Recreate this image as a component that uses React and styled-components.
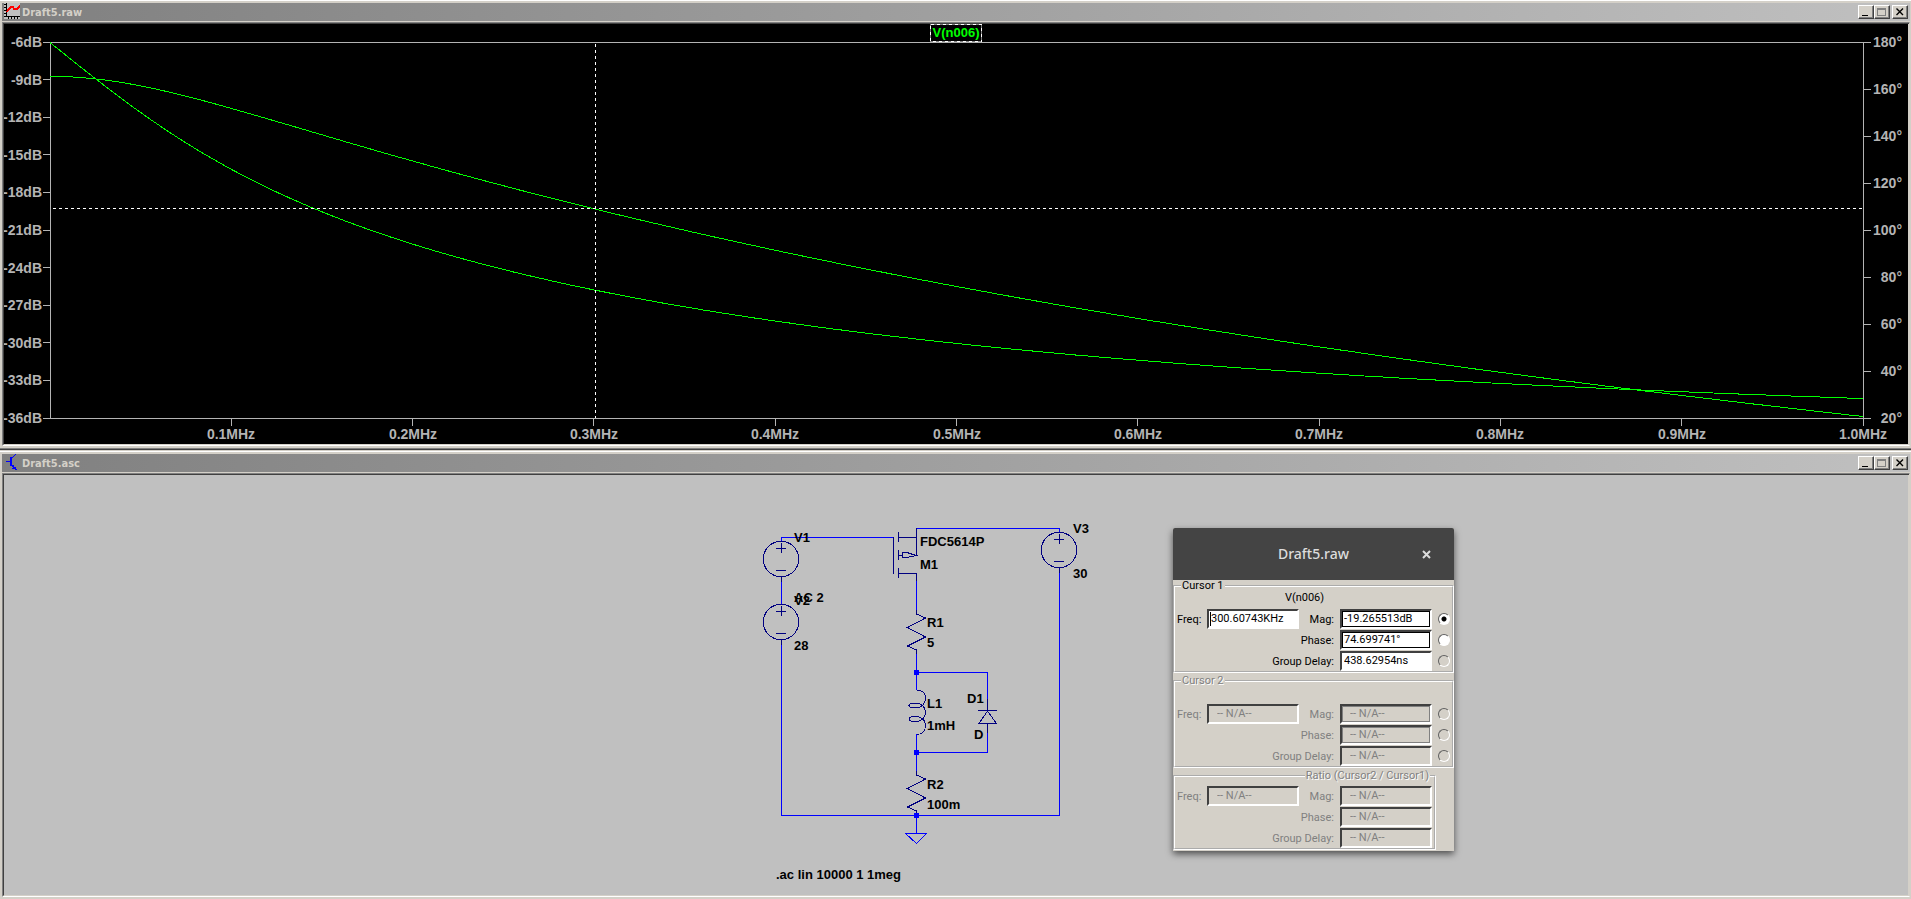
import React, { Fragment } from 'react'
import styled, { createGlobalStyle } from 'styled-components'

const PLOT = { left: 50, right: 1863, top: 42, bottom: 418 }
const POLES = [0.12, 0.397] // MHz
const DC_GAIN = -8.7

const xOf = (mhz) => PLOT.left + mhz * (PLOT.right - PLOT.left)
const yOfDb = (db) =>
  PLOT.top + ((-6 - db) / 30) * (PLOT.bottom - PLOT.top)
const yOfDeg = (deg) =>
  PLOT.top + ((180 - deg) / 160) * (PLOT.bottom - PLOT.top)

const magnitude = (f) =>
  POLES.reduce((sum, p) => sum - 10 * Math.log10(1 + (f / p) ** 2), DC_GAIN)
const phase = (f) =>
  POLES.reduce((sum, p) => sum - (Math.atan(f / p) * 180) / Math.PI, 180)

const trace = (fn, toY) =>
  Array.from({ length: 401 }, (_, i) => {
    const f = i / 400
    return `${xOf(f).toFixed(1)},${(toY(fn(f)) + 0.5).toFixed(1)}`
  }).join(' ')

const dbTicks = Array.from({ length: 11 }, (_, i) => -6 - i * 3)
const degTicks = Array.from({ length: 9 }, (_, i) => 180 - i * 20)
const freqTicks = Array.from({ length: 10 }, (_, i) => (i + 1) / 10)

const WaveIcon = () => (
  <TitleIcon viewBox="0 0 16 16" shapeRendering="crispEdges" aria-hidden="true">
    <rect width="16" height="16" fill="#c0c0c0" />
    <path
      d="M2.5 0V14M0 1.5H2M0 4.5H2M0 7.5H2M0 10.5H2M0 13.5H16M4.5 14V16M7.5 14V16M10.5 14V16M13.5 14V16"
      stroke="#000"
      fill="none"
    />
    <path
      d="M3 9L4 7L6 5L7 4H9L10 6H13L14 5L16 3"
      stroke="#f00"
      strokeWidth="1.5"
      fill="none"
    />
  </TitleIcon>
)

const SchematicIcon = () => (
  <TitleIcon viewBox="0 0 16 16" shapeRendering="crispEdges" aria-hidden="true">
    <path d="M2 7.5H6M11.5 0.5L7 5M7 10L12 15" stroke="#00f" fill="none" />
    <path d="M6 3H8V12H6ZM8 11H10V13H12V15H13V16H11V15H8V14H9V13H8Z" fill="#00f" />
  </TitleIcon>
)

const TitleBar = ({ icon, title }) => (
  <Bar>
    {icon}
    <BarTitle>{title}</BarTitle>
    <BarButton aria-label="Minimize">
      <svg width="14" height="12" shapeRendering="crispEdges">
        <rect x="3" y="9" width="6" height="1" fill="#000" />
      </svg>
    </BarButton>
    <BarButton aria-label="Maximize">
      <svg width="14" height="12" shapeRendering="crispEdges">
        <path d="M2.5 2.5H10.5V9.5H2.5Z" stroke="#808080" fill="none" />
        <rect x="2" y="2" width="9" height="2" fill="#808080" />
      </svg>
    </BarButton>
    <BarButton aria-label="Close" $spaced>
      <svg width="14" height="12">
        <path d="M3.5 2.5L10 9M10 2.5L3.5 9" stroke="#000" strokeWidth="1.4" fill="none" />
      </svg>
    </BarButton>
  </Bar>
)

const Plot = () => (
  <Drawing viewBox="4 24 1904 420" shapeRendering="crispEdges">
    <g stroke="#b4b4b4" fill="none">
      <path d="M43 42.5H1871M50.5 42V419M43 418.5H1871M1863.5 42V426" />
      {dbTicks.map((db) => (
        <path key={db} d={`M43 ${Math.floor(yOfDb(db)) + 0.5}H50`} />
      ))}
      {degTicks.map((deg) => (
        <path key={deg} d={`M1863 ${Math.floor(yOfDeg(deg)) + 0.5}H1871`} />
      ))}
      {freqTicks.map((f) => (
        <path key={f} d={`M${Math.floor(xOf(f)) + 0.5} 418V426`} />
      ))}
    </g>
    {dbTicks.map((db) => (
      <AxisText key={db} x="42" y={Math.round(yOfDb(db)) + 5} textAnchor="end">
        {db}dB
      </AxisText>
    ))}
    {degTicks.map((deg) => (
      <AxisText key={deg} x="1902" y={Math.round(yOfDeg(deg)) + 5} textAnchor="end">
        {deg}°
      </AxisText>
    ))}
    {freqTicks.map((f) => (
      <AxisText key={f} x={Math.round(xOf(f))} y="439" textAnchor="middle">
        {f.toFixed(1)}MHz
      </AxisText>
    ))}
    <g stroke="#0f0" fill="none">
      <polyline points={trace(magnitude, yOfDb)} />
      <polyline points={trace(phase, yOfDeg)} />
    </g>
    <path
      d="M595.5 44V418M53 208.5H1863"
      stroke="#fff"
      strokeDasharray="3 3"
      fill="none"
    />
    <rect x="930.5" y="24.5" width="51" height="17" stroke="#808080" fill="none" />
    <rect
      x="930.5"
      y="24.5"
      width="51"
      height="17"
      stroke="#fff"
      strokeDasharray="3 3"
      fill="none"
    />
    <TraceName x="956" y="37" textAnchor="middle">
      V(n006)
    </TraceName>
  </Drawing>
)

const VoltageSource = ({ x, y }) => (
  <g>
    <circle cx={x} cy={y} r="17.7" />
    <path
      d={`M${x - 5} ${y - 10.5}H${x + 5}M${x + 0.5} ${y - 16}V${y - 6}M${x - 5} ${y + 11.5}H${x + 5}M${x + 0.5} ${y + 18}V${y + 23}`}
    />
  </g>
)

const Resistor = ({ x, y }) => (
  <path d={`M${x} ${y}v4l9 4l-18 9.5l18 9.5l-18 9l9 4v4`} />
)

const labels = [
  ['V1', 794, 542],
  ['V2', 794, 605],
  ['AC 2', 794, 602],
  ['28', 794, 650],
  ['FDC5614P', 920, 546],
  ['M1', 920, 569],
  ['V3', 1073, 533],
  ['30', 1073, 578],
  ['R1', 927, 627],
  ['5', 927, 647],
  ['L1', 927, 708],
  ['1mH', 927, 730],
  ['D1', 967, 703],
  ['D', 974, 739],
  ['R2', 927, 789],
  ['100m', 927, 809],
  ['.ac lin 10000 1 1meg', 776, 879],
]

const Schematic = () => (
  <Drawing viewBox="4 475 1904 420" shapeRendering="crispEdges">
    <g stroke="#0000ff" fill="none">
      <path d="M781.5 541V537.5H893.5" />
      <path d="M916.5 555V528.5H1059.5V532" />
      <path d="M781.5 577V605M781.5 640V815.5H1059.5V568" />
      <path d="M916.5 573V610M916.5 653V690M916.5 734V771M916.5 815V833" />
      <path d="M916.5 672.5H987.5V699M987.5 733V752.5H916.5" />
      <path d="M905.5 833.5H926.5L916.5 843.5Z" />
    </g>
    <g stroke="#000080" fill="none">
      <VoltageSource x={781} y={559} />
      <VoltageSource x={781} y={622} />
      <VoltageSource x={1059} y={550} />
      <path d="M893.5 537V574M898.5 532V542M898.5 550V560M898.5 568V578" />
      <path d="M898 537.5H916.5M916.5 528V555.5M898 555.5H902M902.5 552.5V557.5H907L916 555.5L907 552.5Z" />
      <path d="M898 573.5H916.5V581" />
      <Resistor x={916.5} y={610} />
      <Resistor x={916.5} y={771} />
      <path d="M916.5 690C923 690 925.5 694 925.5 698C925.5 703 922 708 916 708C912 708 909 707 909 705.5C909 704 912 703 916 703C921 703 925.5 707 925.5 712C925.5 717 922 721.5 916 721.5C912 721.5 909 720.5 909 719C909 717.5 912 716.5 916 716.5C921 716.5 925.5 720 925.5 725C925.5 731 922 734.5 916.5 734.5" />
      <path d="M987.5 699V711M978 710.5H997M987.5 711L979 723.5H996.5L987.5 711M987.5 723V733" />
    </g>
    <g fill="#0000ff">
      <rect x="914" y="670" width="5" height="5" />
      <rect x="914" y="750" width="5" height="5" />
      <rect x="914" y="813" width="5" height="5" />
    </g>
    {labels.map(([text, x, y]) => (
      <PartText key={text} x={x} y={y}>
        {text}
      </PartText>
    ))}
  </Drawing>
)

const Reading = ({ id, label, value, wide, disabled, framed, caret }) => (
  <Fragment>
    <Label htmlFor={id} $wide={wide} $disabled={disabled}>
      {label}
    </Label>
    <Field
      id={id}
      defaultValue={value}
      disabled={disabled}
      $framed={framed}
      $caret={caret}
    />
  </Fragment>
)

const CursorGroup = ({ id, title, trace, values, picked, disabled }) => {
  const [freq, mag, phs, delay] = values
  return (
    <Group>
      <Legend $disabled={disabled}>{title}</Legend>
      <TraceLabel>{trace}</TraceLabel>
      <Readings>
        <Reading id={`${id}-freq`} label="Freq:" value={freq} disabled={disabled} caret={!disabled} />
        <Reading id={`${id}-mag`} label="Mag:" value={mag} disabled={disabled} framed />
        <Radio name={id} aria-label="Mag" defaultChecked={picked} $grey={disabled} />
        <Reading id={`${id}-phase`} label="Phase:" value={phs} disabled={disabled} framed wide />
        <Radio name={id} aria-label="Phase" $grey={disabled} />
        <Reading id={`${id}-delay`} label="Group Delay:" value={delay} disabled={disabled} wide />
        <Radio name={id} aria-label="Group Delay" $grey />
      </Readings>
    </Group>
  )
}

const NA = '-- N/A--'

const CursorDialog = () => (
  <Dialog>
    <DialogHeader>
      <DialogTitle>Draft5.raw</DialogTitle>
      <DialogClose aria-label="Close">
        <svg width="9" height="9" viewBox="0 0 9 9">
          <path d="M1 1L8 8M8 1L1 8" stroke="#dcdcdc" strokeWidth="2" />
        </svg>
      </DialogClose>
    </DialogHeader>
    <DialogBody>
      <CursorGroup
        id="cursor1"
        title="Cursor 1"
        trace="V(n006)"
        values={['300.60743KHz', '-19.265513dB', '74.699741°', '438.62954ns']}
        picked
      />
      <CursorGroup id="cursor2" title="Cursor 2" values={[NA, NA, NA, NA]} disabled />
      <Group $narrow>
        <Legend $disabled $right>
          Ratio (Cursor2 / Cursor1)
        </Legend>
        <Readings $noRadio>
          <Reading id="ratio-freq" label="Freq:" value={NA} disabled />
          <Reading id="ratio-mag" label="Mag:" value={NA} disabled />
          <Reading id="ratio-phase" label="Phase:" value={NA} disabled wide />
          <Reading id="ratio-delay" label="Group Delay:" value={NA} disabled wide />
        </Readings>
      </Group>
    </DialogBody>
  </Dialog>
)

const App = () => {
  return (
    <Fragment>
      <GlobalStyle />
      <Window>
        <TitleBar icon={<WaveIcon />} title="Draft5.raw" />
        <Client $color="#000">
          <Plot />
        </Client>
      </Window>
      <Divider />
      <Window>
        <TitleBar icon={<SchematicIcon />} title="Draft5.asc" />
        <Client $color="#c0c0c0">
          <Schematic />
          <CursorDialog />
        </Client>
      </Window>
    </Fragment>
  )
}

const GlobalStyle = createGlobalStyle`
  body {
    margin: 0;
    background: #d4d0c8;
    font-family: 'Liberation Sans', Arial, sans-serif;
  }
`
const Window = styled.section`
  padding: 2px 1px 2px 2px;
  border-top: 1px solid #ffffff;
  background: #d4d0c8;
`
const Divider = styled.div`
  height: 1px;
  border-top: 1px solid #808080;
  border-bottom: 1px solid #d4d0c8;
  background: #404040;
`
const Bar = styled.header`
  display: flex;
  align-items: center;
  height: 18px;
  margin-bottom: 1px;
  padding: 0 2px;
  box-sizing: border-box;
  background: linear-gradient(to right, #808080, #c0c0c0);
`
const TitleIcon = styled.svg`
  width: 16px;
  height: 16px;
  margin-bottom: 2px;
`
const BarTitle = styled.h1`
  flex: 1;
  margin: 0 0 0 2px;
  padding-top: 2px;
  font: bold 11px/18px 'DejaVu Sans Condensed', 'DejaVu Sans', sans-serif;
  color: #d4d0c8;
`
const BarButton = styled.button`
  width: 16px;
  height: 14px;
  margin: 0 0 0 ${(props) => (props.$spaced ? '2px' : '0')};
  padding: 0;
  border: 1px solid;
  border-color: #ffffff #404040 #404040 #ffffff;
  box-shadow: inset -1px -1px #808080;
  background: #d4d0c8;
  svg {
    display: block;
  }
`
const Client = styled.div`
  position: relative;
  border: 1px solid;
  border-color: #808080 #d4d0c8 #ffffff #808080;
  background: ${(props) => props.$color};
  &::before {
    content: '';
    display: block;
    height: 1px;
    background: #404040;
  }
`
const Drawing = styled.svg`
  display: block;
  width: 100%;
  height: auto;
  box-sizing: border-box;
  border-left: 1px solid #404040;
  border-right: 1px solid #d4d0c8;
  border-bottom: 1px solid #d4d0c8;
`
const AxisText = styled.text`
  font-size: 14px;
  font-weight: bold;
  fill: #b4b4b4;
`
const TraceName = styled.text`
  font-size: 13px;
  font-weight: bold;
  fill: #00ff00;
`
const PartText = styled.text`
  font-size: 13px;
  font-weight: bold;
  fill: #000000;
`
const Dialog = styled.div`
  position: absolute;
  top: 54px;
  left: 1170px;
  width: 281px;
  border-radius: 2px 2px 0 0;
  background: #d4d0c8;
  box-shadow: 0 3px 7px rgba(0, 0, 0, 0.6);
  font-family: Roboto, 'Liberation Sans', sans-serif;
  font-size: 11px;
`
const DialogHeader = styled.div`
  display: grid;
  grid-template-columns: 40px 1fr 40px;
  align-items: center;
  height: 52px;
  border-radius: 2px 2px 0 0;
  background: #444444;
`
const DialogTitle = styled.h2`
  grid-column: 2;
  margin: 0;
  font: 500 14px/20px 'Noto Sans', sans-serif;
  text-align: center;
  color: #dcdcdc;
`
const DialogClose = styled.button`
  display: flex;
  padding: 8px;
  border: none;
  background: none;
`
const DialogBody = styled.div`
  display: flex;
  flex-direction: column;
  gap: 2px;
  padding-bottom: 1px;
`
const Group = styled.fieldset`
  width: ${(props) => (props.$narrow ? '263px' : '100%')};
  min-width: 0;
  margin: 0;
  padding: 0 2px;
  padding-top: ${(props) => (props.$narrow ? '4px' : '0')};
  box-sizing: border-box;
  border: 2px groove #ffffff;
`
const Legend = styled.legend`
  margin-left: ${(props) => (props.$right ? 'auto' : '4px')};
  margin-right: ${(props) => (props.$right ? '2px' : '0')};
  padding: 0 1px;
  line-height: 12px;
  color: ${(props) => (props.$disabled ? '#808080' : '#000000')};
  text-shadow: ${(props) => (props.$disabled ? '1px 1px #ffffff' : 'none')};
`
const TraceLabel = styled.div`
  height: 12px;
  margin-bottom: 5px;
  padding-right: 18px;
  line-height: 12px;
  text-align: center;
`
const Readings = styled.div`
  display: grid;
  grid-template-columns: 24px 92px 1fr 92px ${(props) => (props.$noRadio ? '' : '12px')};
  grid-auto-rows: 20px;
  align-items: center;
  gap: 1px 6px;
`
const Label = styled.label`
  grid-column: ${(props) => (props.$wide ? 'span 3' : 'auto')};
  padding-top: 2px;
  line-height: 18px;
  text-align: right;
  white-space: nowrap;
  color: ${(props) => (props.$disabled ? '#808080' : '#000000')};
`
const Field = styled.input`
  width: 92px;
  height: 20px;
  padding: 0 2px 1px;
  padding-left: ${(props) => (props.disabled ? '8px' : '2px')};
  box-sizing: border-box;
  border: 2px solid;
  border-color: #404040 #ffffff #ffffff #404040;
  border-radius: 0;
  outline: ${(props) =>
    props.$framed ? `1px solid ${props.disabled ? '#808080' : '#000000'}` : 'none'};
  outline-offset: -3px;
  font: inherit;
  color: ${(props) => (props.disabled ? '#808080' : '#000000')};
  background: ${(props) => (props.disabled ? '#d4d0c8' : '#ffffff')};
  ${(props) =>
    props.$caret &&
    'background: linear-gradient(#000, #000) 1px 1px / 1px 14px no-repeat #ffffff;'}
`
const Radio = styled.input.attrs({ type: 'radio' })`
  appearance: none;
  width: 12px;
  height: 12px;
  margin: 0;
  border: 1px solid;
  border-color: #606060 #ffffff #ffffff #606060;
  border-radius: 50%;
  background: ${(props) => (props.$grey ? '#d4d0c8' : '#ffffff')};
  &:checked {
    background: radial-gradient(circle, #000000 2px, #ffffff 3px);
  }
`

export default App
